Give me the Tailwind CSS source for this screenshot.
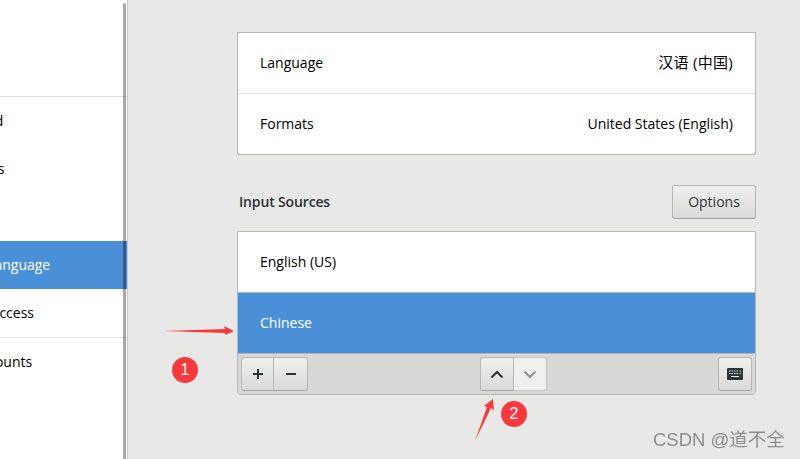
<!DOCTYPE html>
<html lang="en">
<head>
    <meta charset="UTF-8">
    <title>Region &amp; Language</title>
    <script src="https://cdn.jsdelivr.net/npm/@tailwindcss/browser@4"></script>
</head>
<body class="relative w-[800px] h-[459px] overflow-hidden bg-[#e8e8e7] font-['Open_Sans','Noto_Sans_CJK_SC',sans-serif] text-[14px] text-[#2e3436]">
    <div class="flex h-full">
        <!-- Sidebar, cut off on the left -->
        <aside class="relative w-[128px] h-full shrink-0 bg-white border-r border-[#c8c8c6] overflow-hidden whitespace-nowrap text-black">
            <div class="h-[97px] border-b border-[#e2e2e1]"></div>
            <div class="h-[48px] pb-[2px] flex items-center ml-[-75px]">Background</div>
            <div class="h-[48px] pb-[2px] flex items-center ml-[-78px]">Notifications</div>
            <div class="h-[48px] pb-[2px] flex items-center ml-[-75px]">Search</div>
            <div class="h-[48px] pb-[2px] flex items-center bg-[#4a90d9] text-white"><span class="ml-[-75px]">Region &amp; Language</span></div>
            <div class="h-[49px] pb-[2px] flex items-center border-b border-[#e2e2e1]"><span class="ml-[-74px]">Universal Access</span></div>
            <div class="h-[48px] pb-[2px] flex items-center ml-[-74px]">Online Accounts</div>
            <div class="absolute right-[1px] top-[3px] bottom-0 w-[3px] rounded-t-full bg-black/35"></div>
        </aside>

        <main class="w-[519px] ml-[109px] pt-[32px]">
            <section class="h-[123px] bg-white border border-[#b6b6b3] text-black">
                <div class="h-[61px] flex items-center justify-between px-[22px] pb-[2px] border-b border-[#e2e2e1]">
                    <span>Language</span><span class="text-[15px] tracking-[0.3px]">汉语 (中国)</span>
                </div>
                <div class="h-[60px] flex items-center justify-between px-[22px] pb-[2px]">
                    <span>Formats</span><span>United States (English)</span>
                </div>
            </section>

            <div class="flex items-center justify-between mt-[30px] h-[34px] pl-[2px]">
                <h2 class="font-semibold tracking-[-0.15px] pb-[2px]">Input Sources</h2>
                <button class="w-[84px] h-[34px] pb-[2px] rounded-[3px] border border-[#b6b6b3] border-b-[#a3a3a1] bg-gradient-to-b from-[#f0f0ef] to-[#d9d9d7]">Options</button>
            </div>

            <section class="mt-[12px] h-[164px] rounded-b-[4px] border border-[#b6b6b3] overflow-hidden flex flex-col">
                <div class="h-[61px] pb-[2px] flex items-center px-[22px] bg-white text-black border-b border-[#b6b6b3]">English (US)</div>
                <div class="h-[60px] pb-[2px] flex items-center px-[22px] bg-[#4a90d9] text-white">Chinese</div>
                <div class="flex-1 flex items-center justify-between px-[3px] bg-[#d8d8d6] border-t border-[#b6b6b3]">
                    <div class="flex">
                        <button class="w-[33px] h-[34px] flex items-center justify-center rounded-l-[3px] border border-[#b6b6b3] border-b-[#a3a3a1] bg-gradient-to-b from-[#f0f0ef] to-[#d9d9d7]">
                            <svg width="12" height="12" viewBox="0 0 12 12"><path d="M6 1v10M1 6h10" stroke="#2e3436" stroke-width="2"/></svg>
                        </button>
                        <button class="w-[34px] h-[34px] flex items-center justify-center rounded-r-[3px] border border-l-0 border-[#b6b6b3] border-b-[#a3a3a1] bg-gradient-to-b from-[#f0f0ef] to-[#d9d9d7]">
                            <svg width="12" height="12" viewBox="0 0 12 12"><path d="M1 6h10" stroke="#2e3436" stroke-width="2"/></svg>
                        </button>
                    </div>
                    <div class="flex ml-[1px]">
                        <button class="w-[34px] h-[34px] flex items-center justify-center rounded-l-[3px] border border-[#b6b6b3] border-b-[#a3a3a1] bg-gradient-to-b from-[#f0f0ef] to-[#d9d9d7]">
                            <svg width="14" height="9" viewBox="0 0 14 9"><path d="M1.500 7.500 7 2l5.500 5.500" fill="none" stroke="#2e3436" stroke-width="2"/></svg>
                        </button>
                        <button class="w-[33px] h-[34px] flex items-center justify-center rounded-r-[3px] border border-l-0 border-[#c4c4c2] bg-[#f0f0ef]">
                            <svg width="14" height="9" viewBox="0 0 14 9"><path d="M1.500 1.500 7 7l5.500-5.500" fill="none" stroke="#8f9291" stroke-width="2"/></svg>
                        </button>
                    </div>
                    <button class="w-[34px] h-[34px] flex items-center justify-center rounded-[3px] border border-[#b6b6b3] border-b-[#a3a3a1] bg-gradient-to-b from-[#f0f0ef] to-[#d9d9d7]">
                        <svg width="16" height="12" viewBox="0 0 16 12"><rect width="16" height="12" rx="1" fill="#2e3436"/><path d="M2 3h1.500M4.500 3H6M7 3h1.500M9.500 3H11M12.500 3H14M2 5.500h1.500M4.500 5.500H6M7 5.500h1.500M9.500 5.500H11M12.500 5.500H14M4 8.500h8" stroke="#f0f0ef" stroke-width="1.200"/></svg>
                    </button>
                </div>
            </section>
        </main>
    </div>

    <!-- Annotations drawn over the screenshot -->
    <svg class="absolute left-0 top-0" width="800" height="459" viewBox="0 0 800 459">
        <path d="M164 331 L225 329 L224 326 L234 331 L225 335 L225 333 Z" fill="#f9383b"/>
        <path d="M475 441 L487 407 L484 406 L493 399 L494 410 L491 408 Z" fill="#f9383b"/>
    </svg>
    <div class="absolute left-[172px] top-[357px] w-[26px] h-[26px] rounded-full bg-[#f9383b] text-white flex items-center justify-center font-['Liberation_Sans'] text-[16px]">1</div>
    <div class="absolute left-[501px] top-[401px] w-[26px] h-[26px] rounded-full bg-[#f9383b] text-white flex items-center justify-center font-['Liberation_Sans'] text-[16px]">2</div>
    <div class="absolute left-[653px] top-[429px] text-[18.5px] leading-[22px] whitespace-nowrap text-[#8e8e8e] blur-[0.4px] font-['Liberation_Sans','Noto_Sans_CJK_SC',sans-serif]">CSDN @道不全</div>
</body>
</html>
